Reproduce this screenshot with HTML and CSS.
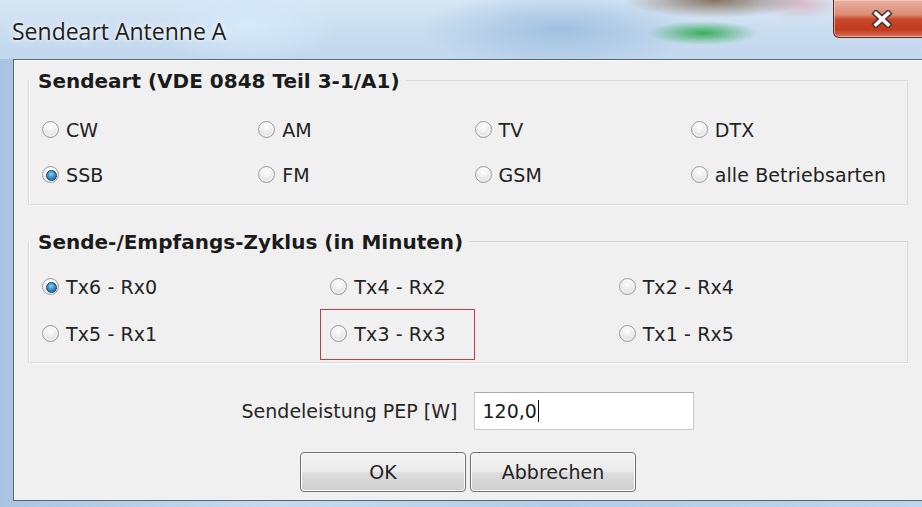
FILE: index.html
```html
<!DOCTYPE html>
<html lang="de">
<head>
<meta charset="utf-8">
<title>Sendeart Antenne A</title>
<link rel="stylesheet" href="styles.css">
</head>
<body>
<div class="window">
  <header class="titlebar">
    <span class="title">Sendeart Antenne A</span>
    <button class="close" type="button" aria-label="Schließen">
      <svg width="22" height="18" viewBox="0 0 22 18">
        <path d="M5 3.5 L17 14.5 M17 3.5 L5 14.5" stroke="#4a3430" stroke-width="6.5" stroke-linecap="square"/>
        <path d="M5 3.5 L17 14.5 M17 3.5 L5 14.5" stroke="#ffffff" stroke-width="3.6" stroke-linecap="square"/>
      </svg>
    </button>
  </header>

  <div class="frame">
    <main class="client">
      <section class="group">
        <div class="group-head"><h2>Sendeart (VDE 0848 Teil 3-1/A1)</h2></div>
        <div class="group-body cols-4">
          <label class="opt"><span class="radio"></span>CW</label>
          <label class="opt"><span class="radio"></span>AM</label>
          <label class="opt"><span class="radio"></span>TV</label>
          <label class="opt"><span class="radio"></span>DTX</label>
          <label class="opt"><span class="radio checked"></span>SSB</label>
          <label class="opt"><span class="radio"></span>FM</label>
          <label class="opt"><span class="radio"></span>GSM</label>
          <label class="opt"><span class="radio"></span>alle Betriebsarten</label>
        </div>
      </section>

      <section class="group group-cycle">
        <div class="group-head"><h2>Sende-/Empfangs-Zyklus (in Minuten)</h2></div>
        <div class="group-body cols-3">
          <label class="opt"><span class="radio checked"></span>Tx6 - Rx0</label>
          <label class="opt"><span class="radio"></span>Tx4 - Rx2</label>
          <label class="opt"><span class="radio"></span>Tx2 - Rx4</label>
          <label class="opt"><span class="radio"></span>Tx5 - Rx1</label>
          <label class="opt marked"><span class="radio"></span>Tx3 - Rx3</label>
          <label class="opt"><span class="radio"></span>Tx1 - Rx5</label>
        </div>
      </section>

      <div class="power-row">
        <span class="power-label">Sendeleistung PEP [W]</span>
        <div class="textbox">120,0<span class="caret"></span></div>
      </div>

      <div class="buttons">
        <button class="btn" type="button">OK</button>
        <button class="btn" type="button">Abbrechen</button>
      </div>
    </main>
  </div>
</div>
</body>
</html>
```

FILE: styles.css
```css
* {
  box-sizing: border-box;
}

html,
body {
  margin: 0;
  padding: 0;
}

body {
  width: 922px;
  height: 507px;
  overflow: hidden;
  font-family: "DejaVu Sans", "Liberation Sans", sans-serif;
  color: #1f1f1f;
  /* glass frame around the client area */
  background: linear-gradient(90deg, #a9c4e2 0%, #c6daee 30%, #b2cde8 60%, #bcd4ec 100%);
}

.window {
  display: flex;
  flex-direction: column;
  height: 507px;
}

/* ---------- caption bar ---------- */
.titlebar {
  height: 59px;
  flex: none;
  display: flex;
  align-items: flex-start;
  overflow: hidden;
  background:
    radial-gradient(ellipse 55px 12px at 703px 33px, rgba(50, 170, 85, 0.95), rgba(80, 180, 110, 0) 100%),
    radial-gradient(ellipse 90px 18px at 715px 0px, rgba(120, 95, 70, 0.85), rgba(110, 90, 70, 0) 100%),
    radial-gradient(ellipse 40px 16px at 800px 4px, rgba(220, 160, 170, 0.6), rgba(220, 160, 170, 0) 100%),
    radial-gradient(ellipse 140px 40px at 560px 30px, rgba(150, 185, 220, 0.8), rgba(150, 185, 220, 0) 100%),
    radial-gradient(ellipse 90px 40px at 250px 25px, rgba(215, 235, 250, 0.9), rgba(215, 235, 250, 0) 100%),
    linear-gradient(180deg, #d7e6f4 0%, #c8dcef 60%, #c3d8ee 100%);
}

.title {
  margin: 15px 0 0 12px;
  font-family: "Open Sans", "DejaVu Sans", sans-serif;
  font-size: 23px;
  line-height: 32px;
  color: #202020;
  text-shadow: 0 0 8px rgba(255, 255, 255, 0.95), 0 0 3px rgba(255, 255, 255, 0.9);
}

.close {
  margin-left: auto;
  margin-right: -9px;
  width: 98px;
  height: 38px;
  border: 1px solid #5e2a22;
  border-top: none;
  border-radius: 0 0 6px 6px;
  display: flex;
  align-items: center;
  justify-content: center;
  padding: 0;
  background: linear-gradient(180deg, #eab3a4 0%, #dc8a73 40%, #c9492c 52%, #c03a1f 80%, #d8745a 100%);
  box-shadow: inset 0 0 0 1px rgba(255, 220, 210, 0.55);
}

.close svg {
  display: block;
}

/* ---------- client area ---------- */
.frame {
  flex: 1;
  padding: 0 0 6px 13px;
  display: flex;
}

.client {
  width: 914px;
  background: #f0f0f0;
  border-left: 1px solid #53677c;
  border-top: 1px solid #53677c;
  border-bottom: 1px solid #53677c;
  padding: 10px 0 0 0;
  display: flex;
  flex-direction: column;
  box-shadow: inset 1px 1px 0 #fafcfe;
}

/* ---------- group boxes ---------- */
.group {
  margin: 0 14px;
}

.group-cycle {
  margin-top: 26px;
}

.group-head {
  height: 22px;
  display: flex;
  align-items: center;
}

.group-head h2 {
  margin: 0 0 0 10px;
  font-size: 20px;
  font-weight: 700;
  line-height: 22px;
  color: #1b1b1b;
  white-space: nowrap;
}

.group-head::after {
  content: "";
  flex: 1;
  margin-left: 6px;
  border-top: 1px solid #d9d9d9;
  position: relative;
  top: -1px;
}

.group-body {
  margin-top: -12px;
  border: 1px solid #d9d9d9;
  border-top: none;
  display: grid;
  padding: 27px 0 7px 13px;
  grid-auto-rows: 45px;
  box-shadow: 0 1px 0 #fcfcfc, inset 1px 0 0 #fbfbfb;
}

.cols-4 {
  grid-template-columns: repeat(4, 1fr);
}

.cols-3 {
  grid-template-columns: repeat(3, 1fr);
  grid-auto-rows: 47px;
  padding-top: 22px;
  padding-bottom: 5px;
}

/* ---------- radio buttons ---------- */
.opt {
  display: flex;
  align-items: center;
  font-size: 19px;
  letter-spacing: 0.1px;
  color: #232323;
  white-space: nowrap;
  position: relative;
}

.radio {
  width: 17px;
  height: 17px;
  flex: none;
  margin-right: 7px;
  border-radius: 50%;
  border: 1px solid #9c9c9c;
  background: radial-gradient(circle at 50% 35%, #ffffff 0%, #ececec 45%, #cbcbcb 100%);
  box-shadow: inset 0 0 0 2px rgba(255, 255, 255, 0.5);
  position: relative;
}

.radio.checked::after {
  content: "";
  position: absolute;
  left: 3px;
  top: 3px;
  width: 9px;
  height: 9px;
  border-radius: 50%;
  border: 1px solid #1c4466;
  background: radial-gradient(circle at 45% 35%, #8fd3f4 0%, #3a8fc4 45%, #1d5c8c 100%);
}

/* highlighted choice */
.marked::after {
  content: "";
  position: absolute;
  left: -10px;
  top: -1px;
  width: 153px;
  height: 49px;
  border: 1px solid #c83c46;
}

/* ---------- power input ---------- */
.power-row {
  margin-top: 29px;
  display: flex;
  justify-content: center;
  align-items: center;
  gap: 17px;
}

.power-label {
  font-size: 19px;
  color: #262626;
}

.textbox {
  width: 220px;
  height: 38px;
  background: #fff;
  border: 1px solid #c5c9d0;
  border-top-color: #a5a9b0;
  padding-left: 7px;
  display: flex;
  align-items: center;
  font-size: 19px;
  color: #1a1a1a;
}

.caret {
  width: 1px;
  height: 22px;
  margin-left: 1px;
  background: #111;
}

/* ---------- dialog buttons ---------- */
.buttons {
  margin-top: 22px;
  display: flex;
  justify-content: center;
  gap: 4px;
}

.btn {
  width: 166px;
  height: 40px;
  border: 1px solid #707070;
  border-radius: 4px;
  background: linear-gradient(180deg, #f3f3f3 0%, #ebebeb 48%, #dddddd 52%, #cfcfcf 100%);
  box-shadow: inset 0 0 0 1px #fbfbfb;
  font-family: "DejaVu Sans", "Liberation Sans", sans-serif;
  font-size: 19px;
  color: #222;
  padding: 0;
}
```
